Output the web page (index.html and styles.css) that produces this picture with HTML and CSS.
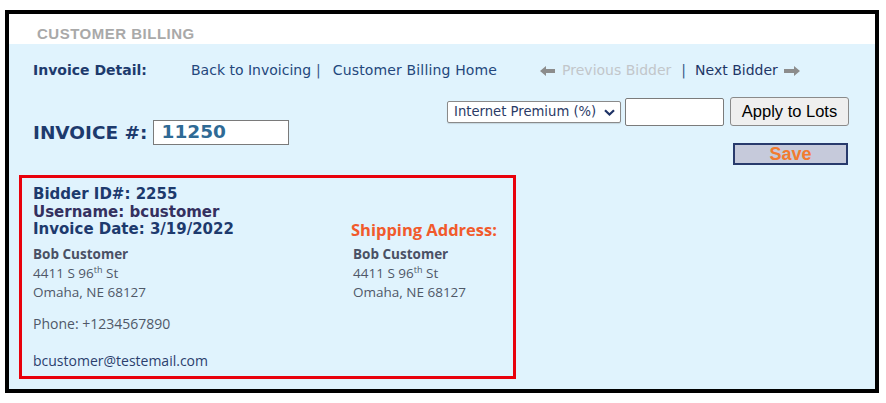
FILE: index.html
```html
<!DOCTYPE html>
<html lang="en">
<head>
<meta charset="utf-8">
<title>Customer Billing</title>
<link rel="stylesheet" href="styles.css">
</head>
<body>
<div class="frame">
  <div class="page-header">CUSTOMER BILLING</div>
  <div class="panel">
    <nav class="nav">
      <span class="nav-label">Invoice Detail:</span>
      <a class="nav-link" href="#">Back to Invoicing</a><span class="sep">|</span>
      <a class="nav-link home" href="#">Customer Billing Home</a>
      <span class="prev">
        <svg class="arrow" width="15" height="10" viewBox="0 0 15 10"><path d="M0 5 L6 0 L6 3 L15 3 L15 7 L6 7 L6 10 Z" fill="#8c8c8c"/></svg>
        Previous Bidder
      </span>
      <span class="sep sep2">|</span>
      <a class="nav-link next" href="#">Next Bidder
        <svg class="arrow" width="16" height="10" viewBox="0 0 16 10"><path d="M16 5 L10 0 L10 3 L0 3 L0 7 L10 7 L10 10 Z" fill="#8c8c8c"/></svg>
      </a>
    </nav>

    <div class="toolbar">
      <div class="invoice-no">
        <span class="invoice-label">INVOICE #:</span>
        <span class="invoice-input">11250</span>
      </div>
      <div class="controls">
        <div class="apply-row">
          <span class="select-wrap">
            <select class="select">
              <option>Internet Premium (%)</option>
            </select>
            <svg class="chev" width="11" height="7" viewBox="0 0 11 7"><path d="M1 1.2 L5.5 5.5 L10 1.2" fill="none" stroke="#1e3366" stroke-width="2.2"/></svg>
          </span>
          <input class="pct-input" type="text">
          <button class="apply-btn" type="button">Apply to Lots</button>
        </div>
        <button class="save-btn" type="button">Save</button>
      </div>
    </div>

    <section class="bidder-box">
      <div class="bidder-head">
        <div class="bh-line">Bidder ID#: 2255</div>
        <div class="bh-line user">Username: bcustomer</div>
        <div class="bh-line">Invoice Date: 3/19/2022</div>
      </div>
      <div class="ship-head">Shipping Address:</div>
      <div class="addr">
        <div class="addr-name">Bob Customer</div>
        <div>4411 S 96<sup>th</sup> St</div>
        <div>Omaha, NE 68127</div>
      </div>
      <div class="addr">
        <div class="addr-name">Bob Customer</div>
        <div>4411 S 96<sup>th</sup> St</div>
        <div>Omaha, NE 68127</div>
      </div>
      <div class="phone">Phone: +1234567890</div>
      <div class="email">bcustomer@testemail.com</div>
    </section>
  </div>
</div>
</body>
</html>
```

FILE: styles.css
```css
* { box-sizing: border-box; }
html, body { margin: 0; padding: 0; background: #ffffff; }
body { padding: 10px 0 0 5px; }

.frame {
  width: 874px;
  height: 383px;
  border: 4px solid #000;
  display: flex;
  flex-direction: column;
  background: #fff;
}

.page-header {
  height: 30px;
  padding: 12px 0 0 28px;
  font-family: "Liberation Sans", Arial, sans-serif;
  font-weight: bold;
  font-size: 15px;
  line-height: 15px;
  color: #a9a9a9;
  letter-spacing: 0.5px;
}

.panel {
  flex: 1;
  background: #e0f3fd;
  padding: 18px 26px 0 10px;
  font-family: "DejaVu Sans", Verdana, sans-serif;
}

.nav {
  display: flex;
  align-items: center;
  font-size: 14px;
  line-height: 17px;
  padding-left: 14px;
  height: 17px;
}
.nav-label { width: 158px; font-weight: bold; color: #1d3a6d; }
.nav-link { color: #24477c; text-decoration: none; display: inline-flex; align-items: center; }
.sep { color: #3a5a8a; margin: 0 12px 0 5px; }
.home { letter-spacing: 0.15px; }
.prev { color: #c2c6ca; margin-left: 43px; display: inline-flex; align-items: center; }
.prev .arrow { margin-right: 7px; }
.sep2 { color: #3a5a8a; margin: 0 9px 0 10px; }
.next { color: #1e3666; }
.next .arrow { margin-left: 6px; }

.toolbar {
  display: flex;
  justify-content: space-between;
  align-items: flex-start;
  margin-top: 18px;
}
.invoice-no {
  display: flex;
  align-items: center;
  padding: 23px 0 0 14px;
  gap: 5px;
}
.invoice-label {
  font-size: 18.5px;
  font-weight: bold;
  color: #1d3a6d;
  line-height: 22px;
}
.invoice-input {
  width: 136px;
  height: 25px;
  border: 1px solid #7a7a7a;
  background: #fff;
  font-size: 18.5px;
  font-weight: bold;
  color: #2f6a95;
  line-height: 22px;
  padding-left: 8px;
}

.controls {
  display: flex;
  flex-direction: column;
  align-items: flex-end;
}
.apply-row { display: flex; align-items: center; }
.select-wrap { position: relative; display: inline-block; margin-right: 4px; }
.select {
  appearance: none;
  -webkit-appearance: none;
  width: 174px;
  height: 22px;
  border: 1px solid #8a8a8a;
  border-radius: 2px;
  box-shadow: 0 1px 1px rgba(0,0,0,0.12);
  background: #fff;
  font-family: "DejaVu Sans", Verdana, sans-serif;
  font-size: 13.2px;
  color: #2a3a66;
  padding: 0 0 0 6px;
  margin: 0;
  display: block;
}
.chev { position: absolute; right: 6px; top: 8px; pointer-events: none; }
.pct-input {
  width: 99px;
  height: 28px;
  border: 1px solid #7b7b7b;
  border-radius: 2px;
  background: #fff;
  margin: 0 6px 0 0;
  padding: 0;
}
.apply-btn {
  width: 119px;
  height: 29px;
  border: 1px solid #8a8a8a;
  border-radius: 3px;
  background: #efefef;
  font-family: "Liberation Sans", Arial, sans-serif;
  font-size: 16.5px;
  color: #000;
  padding: 0;
  margin: 0;
}
.save-btn {
  margin: 17px 1px 0 0;
  width: 115px;
  height: 22px;
  border: 2px solid #283a6c;
  background: #c6cadb;
  font-family: "Liberation Sans", Arial, sans-serif;
  font-weight: bold;
  font-size: 18px;
  line-height: 16px;
  color: #f27b2f;
  padding: 0;
}

.bidder-box {
  width: 497px;
  height: 204px;
  margin-top: 10px;
  border: 3px solid #e8000b;
  padding: 8px 0 0 11px;
  display: grid;
  grid-template-columns: 318px 1fr;
  grid-template-rows: auto auto auto 1fr;
  font-family: "Open Sans", Calibri, sans-serif;
}
.bidder-head { grid-column: 1; }
.bh-line {
  font-family: "DejaVu Sans", Verdana, sans-serif;
  font-weight: bold;
  font-size: 15px;
  line-height: 17.5px;
  color: #1d3a6d;
}
.bh-line.user { color: #34305f; }
.ship-head {
  grid-column: 2;
  align-self: end;
  font-weight: bold;
  font-size: 16.5px;
  line-height: 17.5px;
  color: #f15a2c;
}
.addr {
  margin-top: 6px;
  font-size: 13.5px;
  line-height: 19px;
  color: #4f5868;
}
.addr + .addr { padding-left: 2px; }
.addr-name { font-weight: bold; color: #4a5064; }
.addr sup { font-size: 9px; line-height: 0; vertical-align: 5px; }
.phone {
  grid-column: 1 / 3;
  margin-top: 12px;
  font-size: 14px;
  line-height: 19px;
  color: #4f5868;
}
.email {
  grid-column: 1 / 3;
  align-self: end;
  margin-bottom: 6px;
  font-size: 14px;
  line-height: 19px;
  color: #2b3f6e;
}
```
